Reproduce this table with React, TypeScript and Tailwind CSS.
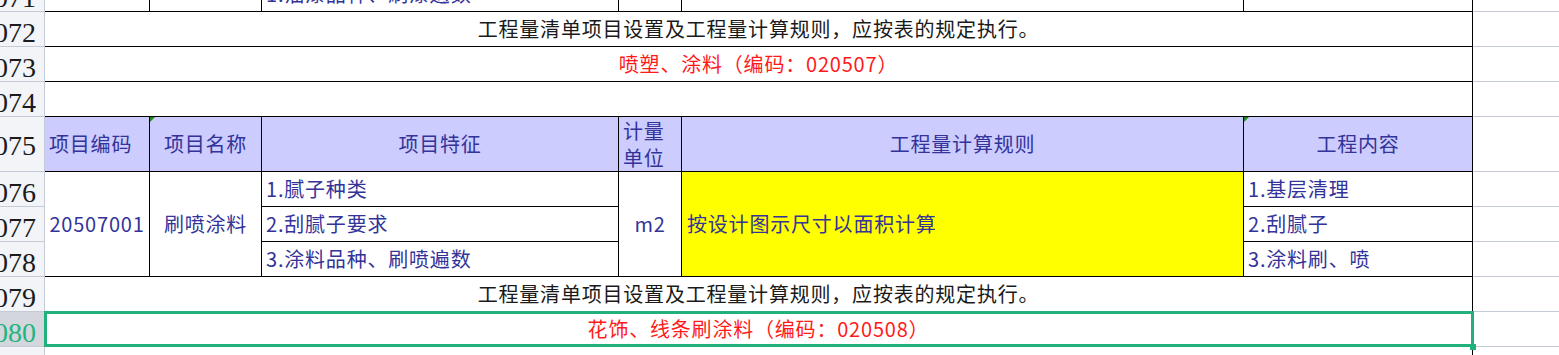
import type { ReactNode } from "react";

const navy = "text-[#333399]";

function RowNum({ n, tall, active }: { n: string; tall?: boolean; active?: boolean }) {
  return (
    <td
      className={`p-0 border-r border-b border-[#c4cad6] ${
        active ? "bg-[#d3d7dd] text-[#22b47c]" : "bg-[#f2f4f7] text-[#1b1b1b]"
      }`}
    >
      <div
        className={`flex justify-end items-center overflow-hidden pr-[8px] font-['Liberation_Serif',serif] text-[28px] leading-none tracking-normal ${
          tall ? "h-[53px] pt-[4px]" : "h-[34px] pt-[8px]"
        }`}
      >
        {n}
      </div>
    </td>
  );
}

function Cell({
  children,
  className = "",
  rowSpan,
  colSpan,
}: {
  children?: ReactNode;
  className?: string;
  rowSpan?: number;
  colSpan?: number;
}) {
  return (
    <td rowSpan={rowSpan} colSpan={colSpan} className={`p-0 align-middle border-r border-b border-black ${className}`}>
      {children}
    </td>
  );
}

function Spare() {
  return <td className="p-0 border-b border-[#c4cad6]" />;
}

function Flag() {
  return (
    <span className="absolute left-0 top-0 w-[5px] h-[5px] bg-[#1a8c1a] [clip-path:polygon(0_0,100%_0,0_100%)]" />
  );
}

export default function App() {
  return (
    <div className="w-[1559px] h-[355px] overflow-hidden bg-white">
      <table className="-mt-[23px] w-[1559px] table-fixed border-separate border-spacing-0 font-['Noto_Sans_CJK_SC',sans-serif] text-[20px] leading-normal tracking-[0.8px]">
        <colgroup>
          <col className="w-[45px]" />
          <col className="w-[105px]" />
          <col className="w-[112px]" />
          <col className="w-[357px]" />
          <col className="w-[63px]" />
          <col className="w-[562px]" />
          <col className="w-[229px]" />
          <col />
        </colgroup>
        <tbody>
          <tr>
            <RowNum n="1071" />
            <Cell />
            <Cell />
            <Cell className={`pl-[4px] ${navy}`}>1.油漆品种、刷漆遍数</Cell>
            <Cell />
            <Cell />
            <Cell />
            <Spare />
          </tr>
          <tr>
            <RowNum n="1072" />
            <Cell colSpan={6} className="text-center text-[#1a1a1a]">
              工程量清单项目设置及工程量计算规则，应按表的规定执行。
            </Cell>
            <Spare />
          </tr>
          <tr>
            <RowNum n="1073" />
            <Cell colSpan={6} className="text-center text-[#ff1a1a]">
              喷塑、涂料（编码：020507）
            </Cell>
            <Spare />
          </tr>
          <tr>
            <RowNum n="1074" />
            <Cell colSpan={6} />
            <Spare />
          </tr>
          <tr className="bg-[#ccccff]">
            <RowNum n="1075" tall />
            <Cell className={`pl-[4px] ${navy}`}>项目编码</Cell>
            <Cell className={`relative text-center ${navy}`}>
              <Flag />
              项目名称
            </Cell>
            <Cell className={`text-center ${navy}`}>项目特征</Cell>
            <Cell className={`pl-[4px] leading-[27px] ${navy}`}>
              计量
              <br />
              单位
            </Cell>
            <Cell className={`text-center ${navy}`}>工程量计算规则</Cell>
            <Cell className={`relative text-center ${navy}`}>
              <Flag />
              工程内容
            </Cell>
            <td className="p-0 border-b border-[#c4cad6] bg-white" />
          </tr>
          <tr>
            <RowNum n="1076" />
            <Cell rowSpan={3} className={`text-center ${navy}`}>
              20507001
            </Cell>
            <Cell rowSpan={3} className={`text-center ${navy}`}>
              刷喷涂料
            </Cell>
            <Cell className={`pl-[4px] ${navy}`}>1.腻子种类</Cell>
            <Cell rowSpan={3} className={`text-center ${navy}`}>
              m2
            </Cell>
            <Cell rowSpan={3} className={`bg-[#ffff00] pl-[5px] ${navy}`}>
              按设计图示尺寸以面积计算
            </Cell>
            <Cell className={`pl-[4px] ${navy}`}>1.基层清理</Cell>
            <Spare />
          </tr>
          <tr>
            <RowNum n="1077" />
            <Cell className={`pl-[4px] ${navy}`}>2.刮腻子要求</Cell>
            <Cell className={`pl-[4px] ${navy}`}>2.刮腻子</Cell>
            <Spare />
          </tr>
          <tr>
            <RowNum n="1078" />
            <Cell className={`pl-[4px] ${navy}`}>3.涂料品种、刷喷遍数</Cell>
            <Cell className={`pl-[4px] ${navy}`}>3.涂料刷、喷</Cell>
            <Spare />
          </tr>
          <tr>
            <RowNum n="1079" />
            <Cell colSpan={6} className="text-center text-[#1a1a1a]">
              工程量清单项目设置及工程量计算规则，应按表的规定执行。
            </Cell>
            <Spare />
          </tr>
          <tr>
            <RowNum n="1080" active />
            <Cell colSpan={6} className="relative text-center text-[#ff1a1a]">
              花饰、线条刷涂料（编码：020508）
              <div className="absolute -left-px -top-px -right-[2px] -bottom-[1px] border-[3px] border-[#21b27b]" />
              <div className="absolute -right-[4px] -bottom-[4px] w-[6px] h-[6px] bg-[#21b27b]" />
            </Cell>
            <Spare />
          </tr>
          <tr>
            <RowNum n="1081" />
            <Cell colSpan={6} />
            <Spare />
          </tr>
        </tbody>
      </table>
    </div>
  );
}
